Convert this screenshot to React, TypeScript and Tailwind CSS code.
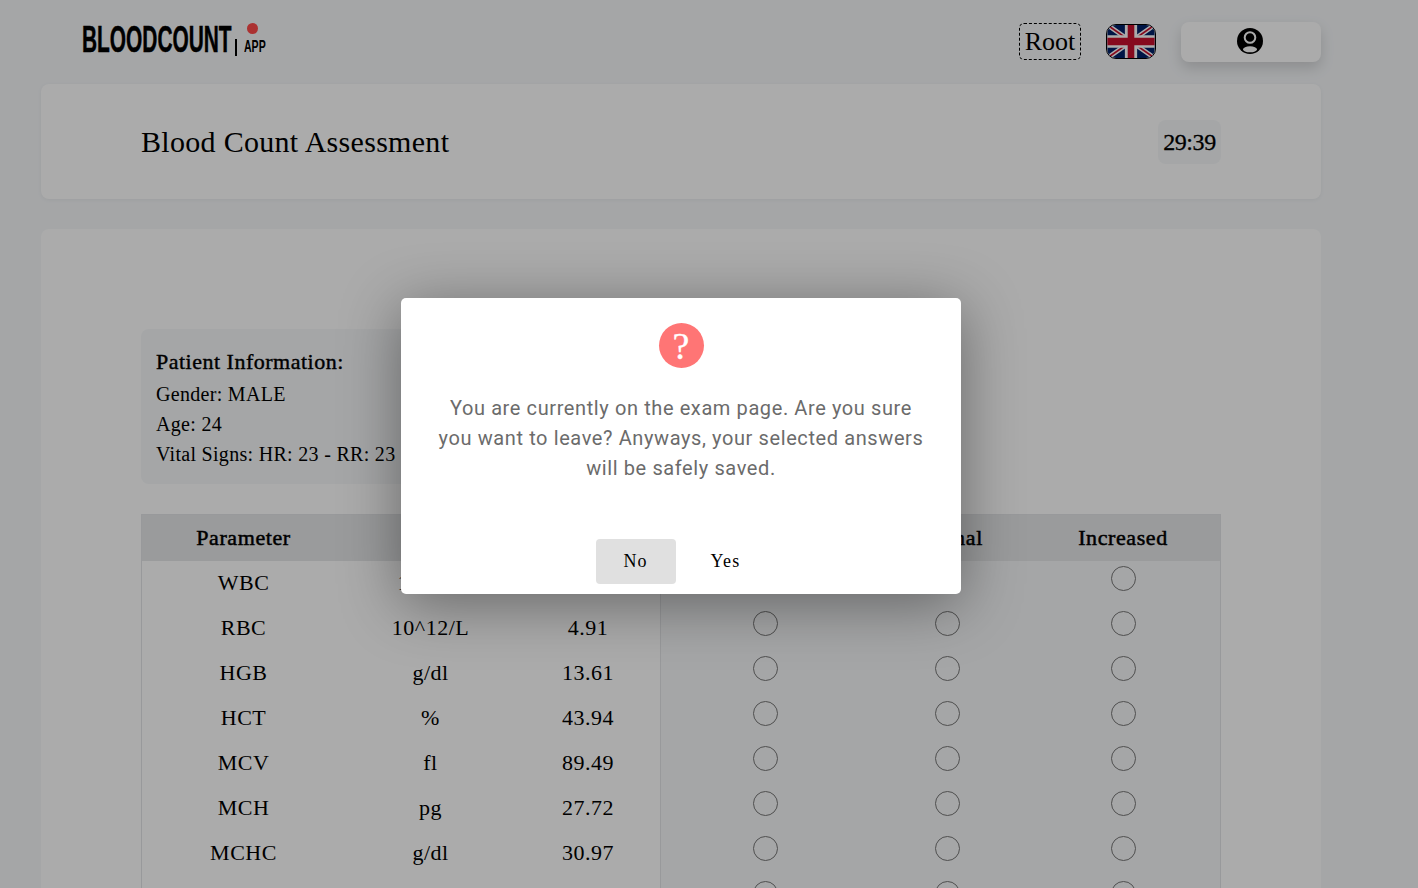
const rows = [
  ["WBC", "10^9/L", "7.21"],
  ["RBC", "10^12/L", "4.91"],
  ["HGB", "g/dl", "13.61"],
  ["HCT", "%", "43.94"],
  ["MCV", "fl", "89.49"],
  ["MCH", "pg", "27.72"],
  ["MCHC", "g/dl", "30.97"],
  ["", "", ""],
];

function Radio() {
  return <span className="block size-[25px] rounded-full border border-[#767676] bg-[#f7f8f9]" />;
}

function UkFlag() {
  return (
    <svg viewBox="0 0 50 35" className="h-[35px] w-[50px] rounded-[10px] border border-black">
      <rect width="50" height="35" fill="#012169" />
      <path d="M0 0L50 35M50 0L0 35" stroke="#fff" strokeWidth="5" />
      <path d="M0 0L50 35M50 0L0 35" stroke="#c8102e" strokeWidth="1.8" />
      <path d="M25 0V35" stroke="#fff" strokeWidth="13" />
      <path d="M0 17.5H50" stroke="#fff" strokeWidth="13" />
      <path d="M25 0V35" stroke="#c8102e" strokeWidth="7" />
      <path d="M0 17.5H50" stroke="#c8102e" strokeWidth="8" />
    </svg>
  );
}

function UserIcon() {
  return (
    <svg viewBox="0 0 26 26" className="size-[26px]">
      <circle cx="13" cy="13" r="13" fill="#000" />
      <circle cx="13" cy="9.5" r="5.3" fill="none" stroke="#fff" strokeWidth="2" />
      <ellipse cx="13" cy="21.3" rx="7" ry="3" fill="#fff" />
    </svg>
  );
}

export default function App() {
  return (
    <div className="relative h-[888px] overflow-hidden bg-[#f6f8fa] font-['Liberation_Serif',serif] text-black">
      <div className="ml-[41px] w-[1280px]">
        <header className="flex h-[84px] items-center">
          <div className="ml-[41px] flex h-[40px] items-start">
            <span className="mt-[-2px] w-[153px] origin-left scale-x-[.58] whitespace-nowrap font-['Liberation_Sans',sans-serif] text-[36px] leading-[40px] font-bold [-webkit-text-stroke:0.5px_black]">
              BLOODCOUNT
            </span>
            <span className="mt-[17px] h-[17px] w-[2px] bg-black" />
            <div className="ml-[7px] flex w-[24px] flex-col items-start">
              <span className="mt-[1px] ml-[3px] size-[11px] rounded-full bg-[#ff4a4a]" />
              <span className="mt-[4px] origin-left scale-x-[.62] whitespace-nowrap font-['Liberation_Sans',sans-serif] text-[17px] leading-[18px] font-bold">
                APP
              </span>
            </div>
          </div>
          <div className="ml-auto flex items-center">
            <span className="mb-[2px] flex h-[37px] w-[62px] items-center justify-center rounded-[5px] border border-dashed border-black text-[26px]">
              Root
            </span>
            <span className="mb-[2px] ml-[25px]">
              <UkFlag />
            </span>
            <button className="ml-[25px] flex h-[40px] w-[140px] items-center justify-center rounded-[8px] bg-white pr-[2px] pb-[2px] shadow-[0_6px_14px_rgba(0,0,0,0.15)]">
              <UserIcon />
            </button>
          </div>
        </header>

        <section className="flex h-[115px] items-center justify-between rounded-[8px] bg-white pr-[100px] pl-[100px] shadow-[0_1px_4px_rgba(0,0,0,0.05)]">
          <h1 className="text-[30px] tracking-[0.3px]">Blood Count Assessment</h1>
          <span className="flex h-[44px] w-[63px] items-center justify-center rounded-[8px] bg-[#f6f8fa] text-[24px] tracking-[-0.4px] [-webkit-text-stroke:0.3px_black]">
            29:39
          </span>
        </section>

        <section className="mt-[30px] rounded-[8px] bg-white px-[100px] pt-[100px] pb-[40px]">
          <div className="h-[155px] w-[560px] rounded-[8px] bg-[#f6f8fa] px-[15px] pt-[18px] text-[20px] leading-[30px] tracking-[0.3px]">
            <h2 className="mb-[2px] text-[22px] leading-[30px] tracking-[0.5px] [-webkit-text-stroke:0.4px_black]">Patient Information:</h2>
            <p>Gender: MALE</p>
            <p>Age: 24</p>
            <p>Vital Signs: HR: 23 - RR: 23</p>
          </div>

          <div className="mt-[30px] border border-[#e3e5e8]">
            <div className="grid h-[46px] grid-cols-[203px_170px_146px_208px_156px_1fr] items-center bg-[#e6e7e9] pb-[2px] text-center text-[22px] tracking-[0.6px] [-webkit-text-stroke:0.5px_black]">
              <span>Parameter</span>
              <span>Unit</span>
              <span>Value</span>
              <span>Decreased</span>
              <span className="pl-[1px]">Normal</span>
              <span className="pl-[1px]">Increased</span>
            </div>
            {rows.map(([name, unit, value], i) => (
              <div key={i} className="grid h-[45px] grid-cols-[203px_170px_146px_208px_156px_1fr] text-center text-[22px] tracking-[0.5px]">
                <span className="pt-[5px]">{name}</span>
                <span className="pt-[5px] pl-[1px]">{unit}</span>
                <span className="border-r border-[#e3e5e8] pt-[5px] pl-[1px]">{value}</span>
                <span className="flex justify-center bg-[#f6f8fa] pt-[5px]"><Radio /></span>
                <span className="flex justify-center bg-[#f6f8fa] pt-[5px]"><Radio /></span>
                <span className="flex justify-center bg-[#f6f8fa] pt-[5px] pl-[1px]"><Radio /></span>
              </div>
            ))}
          </div>
        </section>
      </div>

      {/* exit confirm dialog */}
      <div className="absolute inset-0 flex items-start justify-center bg-black/[.33] pt-[298px] pr-[56px]">
        <div className="flex h-[296px] w-[560px] flex-col items-center rounded-[5px] bg-white pt-[25px] shadow-[0_10px_60px_rgba(0,0,0,0.4)]">
          <span className="flex size-[45px] items-center justify-center rounded-full bg-[#ff7575] text-[38px] leading-none text-white [-webkit-text-stroke:0.3px_white]">
            ?
          </span>
          <p className="mt-[25px] w-[500px] text-center font-['Roboto',sans-serif] text-[20px] leading-[30px] tracking-[0.6px] text-[#6b6b6b]">
            You are currently on the exam page. Are you sure you want to leave? Anyways, your selected answers will be safely saved.
          </p>
          <div className="mt-auto mr-[26px] mb-[10px] flex items-center text-[18px] tracking-[1.2px]">
            <button className="h-[45px] w-[80px] rounded-[4px] bg-[#e0e0e0]">No</button>
            <button className="ml-[35px] h-[45px]">Yes</button>
          </div>
        </div>
      </div>
    </div>
  );
}
